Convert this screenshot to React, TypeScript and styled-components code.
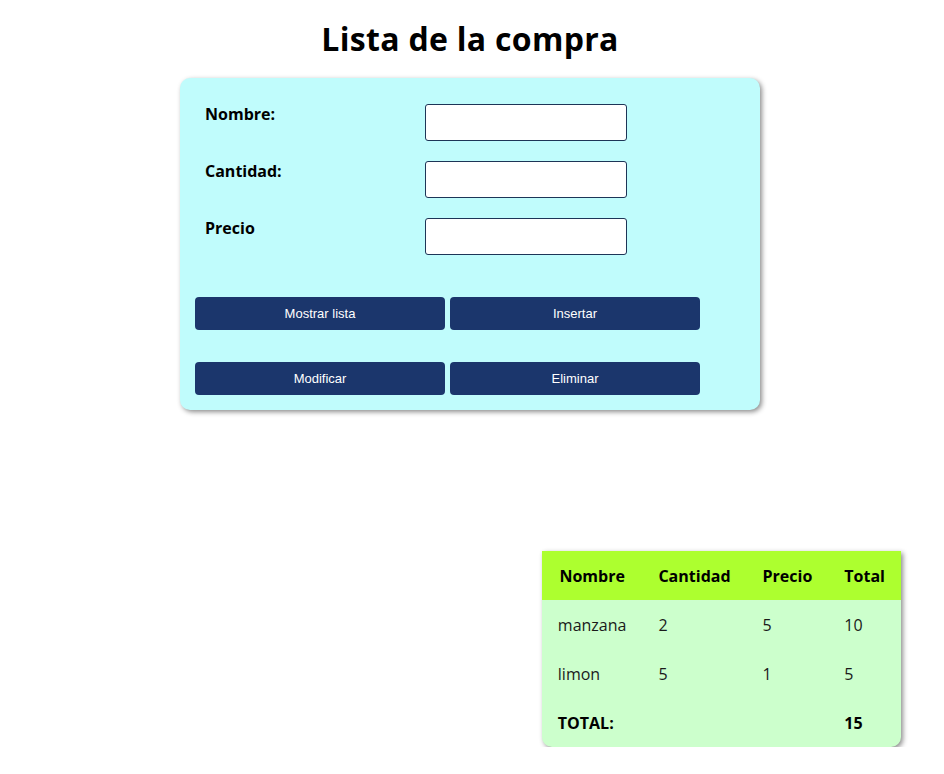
import React from "react";
import styled, { createGlobalStyle } from "styled-components";

const GlobalStyle = createGlobalStyle`
  html, body { margin: 0; padding: 0; background: #ffffff; }
  body { font-family: "Open Sans", "DejaVu Sans", sans-serif; color: #000; }
`;

const Page = styled.div`
  width: 944px;
  padding: 0 4px 0 0;
  box-sizing: border-box;
  display: flex;
  flex-direction: column;
  align-items: center;
`;

const Title = styled.h1`
  margin: 17px 0 17px;
  font-size: 32px;
  font-weight: 700;
  letter-spacing: 0.3px;
  line-height: 44px;
`;

const Card = styled.div`
  width: 580px;
  box-sizing: border-box;
  background: #c0fcfc;
  border-radius: 10px;
  box-shadow: 2px 2px 5px rgba(0, 0, 0, 0.45);
  padding: 26px 15px 15px;
`;

const FormGrid = styled.div`
  display: grid;
  grid-template-columns: 220px 202px;
  row-gap: 20px;
  padding-left: 10px;
`;

const Label = styled.label`
  font-size: 16px;
  font-weight: 700;
  line-height: 20px;
`;

const Input = styled.input`
  box-sizing: border-box;
  width: 202px;
  height: 37px;
  border: 1px solid #1d3557;
  border-radius: 3px;
  background: #fff;
  margin: 0;
`;

const ButtonGrid = styled.div`
  display: grid;
  grid-template-columns: 250px 250px;
  column-gap: 5px;
  row-gap: 32px;
  margin-top: 42px;
`;

const Button = styled.button`
  height: 33px;
  border: none;
  border-radius: 4px;
  background: #1b366c;
  color: #fff;
  font-family: "Liberation Sans", Arial, sans-serif;
  font-size: 13px;
  padding: 0;
`;

const TableRow = styled.div`
  width: 100%;
  display: flex;
  justify-content: flex-end;
  padding-right: 39px;
  box-sizing: border-box;
  margin-top: 141px;
`;

const Table = styled.table`
  border-collapse: collapse;
  background: #ccffcc;
  border-bottom-left-radius: 10px;
  border-bottom-right-radius: 10px;
  box-shadow: 2px 2px 5px rgba(0, 0, 0, 0.45);
  overflow: hidden;
  font-size: 16px;
`;

const Th = styled.th`
  background: #adff2f;
  height: 49px;
  padding: 0 16px;
  font-weight: 700;
  text-align: center;
`;

const Td = styled.td<{ $bold?: boolean }>`
  height: 49px;
  padding: 0 16px;
  text-align: left;
  font-weight: ${(p) => (p.$bold ? 700 : 400)};
  color: ${(p) => (p.$bold ? "#000" : "#1a1a1a")};
`;

const rows = [
  { nombre: "manzana", cantidad: 2, precio: 5 },
  { nombre: "limon", cantidad: 5, precio: 1 },
];

export default function App() {
  const total = rows.reduce((s, r) => s + r.cantidad * r.precio, 0);
  return (
    <Page>
      <GlobalStyle />
      <Title>Lista de la compra</Title>
      <Card>
        <FormGrid>
          <Label>Nombre:</Label>
          <Input type="text" />
          <Label>Cantidad:</Label>
          <Input type="text" />
          <Label>Precio</Label>
          <Input type="text" />
        </FormGrid>
        <ButtonGrid>
          <Button>Mostrar lista</Button>
          <Button>Insertar</Button>
          <Button>Modificar</Button>
          <Button>Eliminar</Button>
        </ButtonGrid>
      </Card>
      <TableRow>
        <Table>
          <thead>
            <tr>
              <Th>Nombre</Th>
              <Th>Cantidad</Th>
              <Th>Precio</Th>
              <Th>Total</Th>
            </tr>
          </thead>
          <tbody>
            {rows.map((r) => (
              <tr key={r.nombre}>
                <Td>{r.nombre}</Td>
                <Td>{r.cantidad}</Td>
                <Td>{r.precio}</Td>
                <Td>{r.cantidad * r.precio}</Td>
              </tr>
            ))}
            <tr>
              <Td $bold>TOTAL:</Td>
              <Td />
              <Td />
              <Td $bold>{total}</Td>
            </tr>
          </tbody>
        </Table>
      </TableRow>
    </Page>
  );
}
